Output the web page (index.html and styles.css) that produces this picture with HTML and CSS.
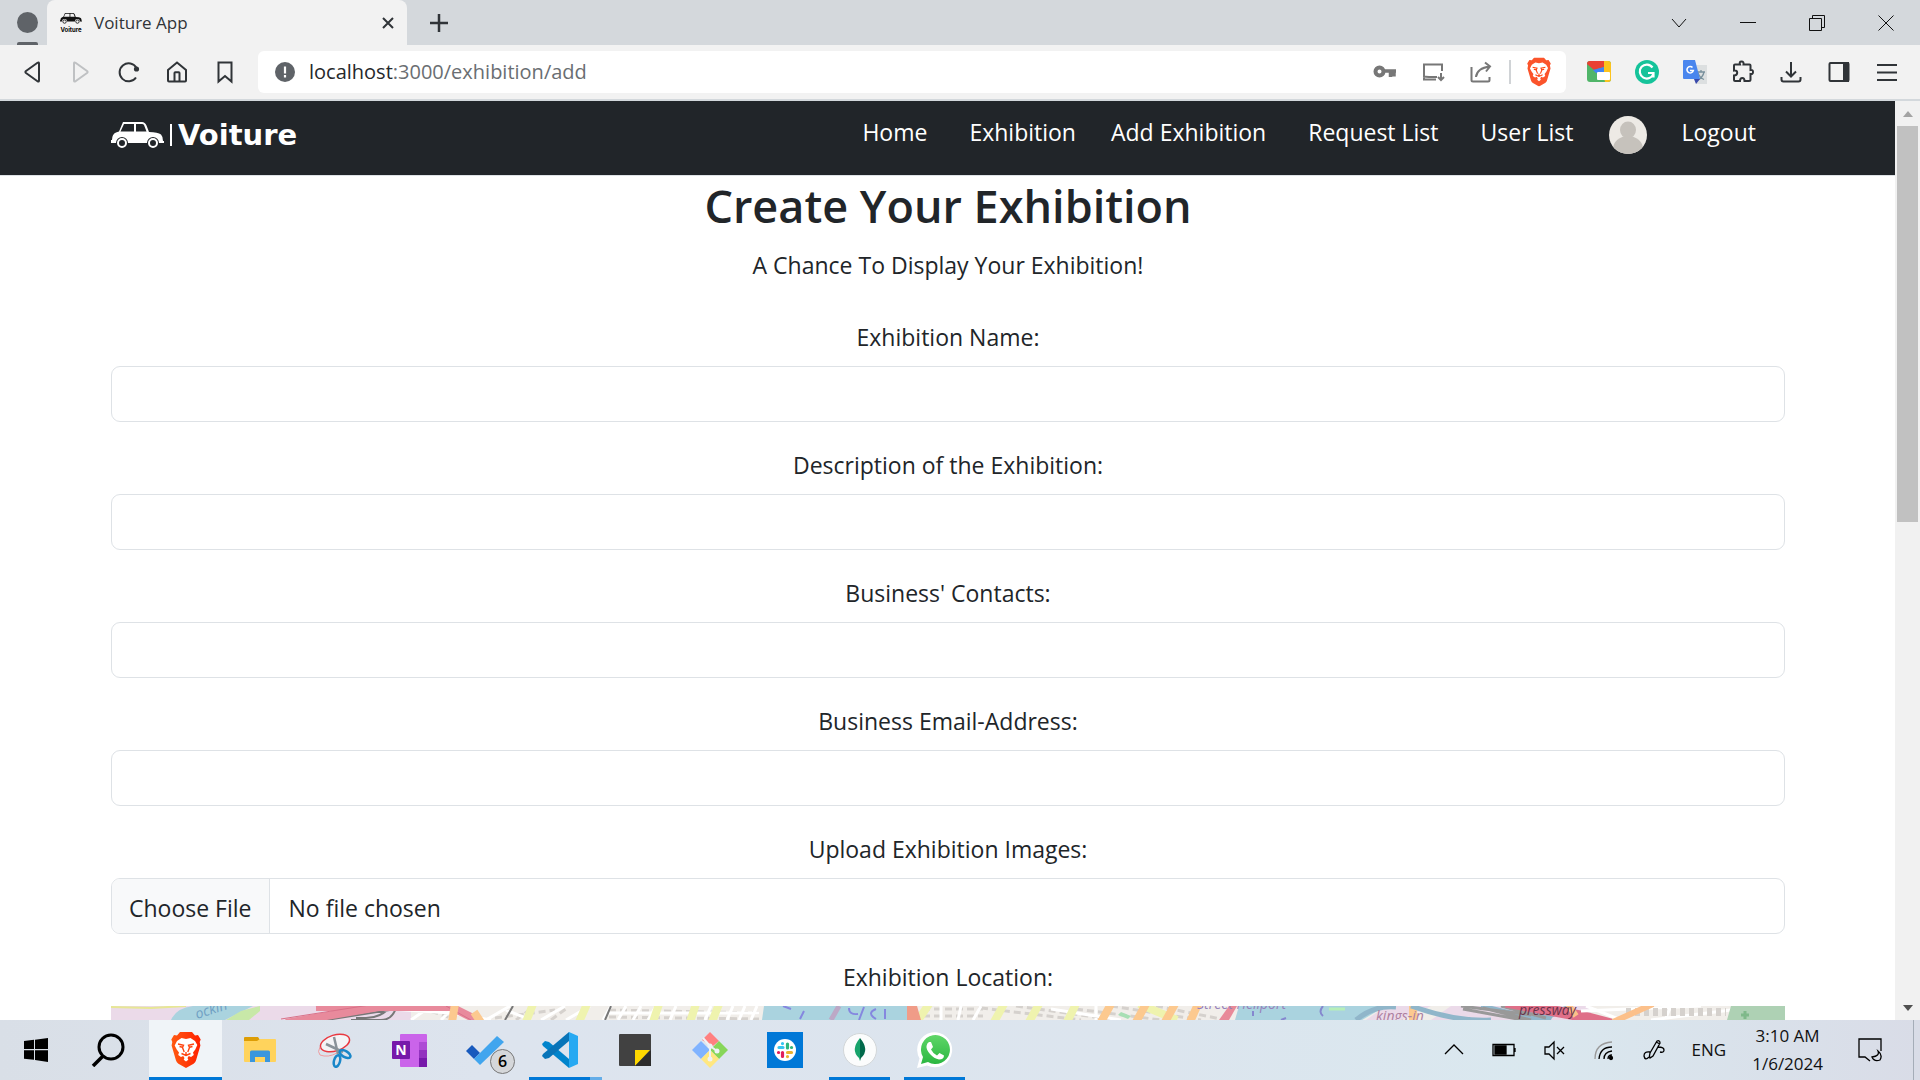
FILE: index.html
```html
<!DOCTYPE html>
<html lang="en">
<head>
<meta charset="utf-8">
<meta name="viewport" content="width=device-width, initial-scale=1">
<title>Voiture App</title>
<link rel="stylesheet" href="styles.css">
</head>
<body>
<svg class="defs" width="0" height="0" aria-hidden="true">
  <defs>
    <linearGradient id="brave-fill" x1="0" x2="1"><stop offset="0" stop-color="#ff5a12"/><stop offset="1" stop-color="#ff2000"/></linearGradient>
    <linearGradient id="wa-fill" x1="0" y1="0" x2="0" y2="1"><stop offset="0" stop-color="#5fd668"/><stop offset="1" stop-color="#2bb741"/></linearGradient>
    <symbol id="lion" viewBox="0 0 30 36">
      <path d="M9 0h12l3 3.400 3-.4 2.700 4.500-1 2.500.7 3.500-4.400 15q-.6 2-2.400 3.200L15 36l-7.600-4.300Q5.600 30.500 5 28.500L.6 13.500l.7-3.500-1-2.500L3 3l3 .4z"/>
      <path fill="#fff" d="M15 7l4.500-1 4.500 3 2.300 4-2 4.500-2.300 3 .8 2.500-2.800 2-2.200-1-1.300 2 .8 1.800L15 29.600l-2.300-1.800.8-1.800-1.300-2-2.200 1-2.800-2L8 20.500l-2.300-3-2-4L6 9l4.500-3z"/>
      <path fill="none" stroke="#ff4410" stroke-width="1.400" d="M7 12l5.500 1.200-1 2.300 1.700 4.500M23 12l-5.500 1.200 1 2.300-1.700 4.500M8.500 14.500l3 .8M21.500 14.500l-3 .8M10.500 21.500l4.500 2 4.500-2M15 20v3.500"/>
    </symbol>
    <symbol id="car" viewBox="0 0 53 27">
      <path fill="currentColor" fill-rule="evenodd" d="M12 0h19q3 0 4.500 3.500L38 10q9 0 12 2.500 2 2 2 6.500h1v2h-5a6 6 0 0 0-12 0H17a6 6 0 0 0-12 0H0v-3h1q0-6 4-7.500l3-1zM13 2l-3.500 7.500H23V2zM25 2v7.500h10.500L33 3q-.6-1-2-1z"/>
      <circle cx="11" cy="21" r="4" fill="none" stroke="currentColor" stroke-width="2"/>
      <circle cx="42" cy="21" r="4" fill="none" stroke="currentColor" stroke-width="2"/>
    </symbol>
  </defs>
</svg>

<header class="browser">
  <div class="tabstrip">
    <div class="profile"><span class="profile-dot"></span><span class="profile-bar"></span></div>
    <div class="tab">
      <svg class="favicon" viewBox="0 0 24 22"><svg x="1" y="0" width="22" height="13" color="#111"><use href="#car"/></svg><text x="12" y="20" text-anchor="middle" class="favicon-text">Voiture</text></svg>
      <span class="tab-title">Voiture App</span>
      <button class="icon-btn" aria-label="Close tab"><svg width="14" height="14" viewBox="0 0 14 14"><path d="M2 2l10 10M12 2L2 12" stroke="#303438" stroke-width="2"/></svg></button>
    </div>
    <button class="icon-btn new-tab" aria-label="New tab"><svg width="20" height="20" viewBox="0 0 20 20"><path d="M10 1v18M1 10h18" stroke="#303438" stroke-width="2.500"/></svg></button>
    <div class="window-controls">
      <button class="icon-btn" aria-label="Search tabs"><svg width="16" height="16" viewBox="0 0 16 16"><path d="M1 4l7 8 7-8" class="thin"/></svg></button>
      <button class="icon-btn" aria-label="Minimize"><svg width="16" height="16" viewBox="0 0 16 16"><path d="M0 7.500h16" class="thin"/></svg></button>
      <button class="icon-btn" aria-label="Restore"><svg width="16" height="16" viewBox="0 0 16 16"><path d="M.5 3.500h12v12H.5zM3.500 3.500v-3h12v12h-3" class="thin"/></svg></button>
      <button class="icon-btn" aria-label="Close"><svg width="16" height="16" viewBox="0 0 16 16"><path d="M.5.5l15 15M15.500.5l-15 15" class="thin"/></svg></button>
    </div>
  </div>
  <div class="toolbar">
    <button class="icon-btn" aria-label="Back"><svg class="tool" viewBox="0 0 24 24"><path d="M18 3.500v17q0 1.800-1.500.7L5 13q-1.200-1 0-2L16.500 2.800Q18 1.700 18 3.500z"/></svg></button>
    <button class="icon-btn" aria-label="Forward"><svg class="tool tool-faded" viewBox="0 0 24 24"><path d="M5 3.500v17q0 1.800 1.500.7L18 13q1.200-1 0-2L6.500 2.800Q5 1.700 5 3.500z"/></svg></button>
    <button class="icon-btn" aria-label="Reload"><svg class="tool" viewBox="0 0 24 24"><path d="M19 17.500A9 9 0 1 1 19.500 8"/><circle cx="19.500" cy="9" r="2.600" fill="#303438" stroke="none"/></svg></button>
    <button class="icon-btn" aria-label="Home"><svg class="tool" viewBox="0 0 24 24"><path d="M3 10l9-7.500 9 7.500v10.500q0 1-1 1H4q-1 0-1-1zM9.500 21v-8q0-.8.8-.8h3.400q.8 0 .8.800v8"/></svg></button>
    <button class="icon-btn" aria-label="Bookmark"><svg class="tool" viewBox="0 0 24 24"><path d="M5.500 2.500h13v19L12 16l-6.500 5.500z"/></svg></button>
    <div class="address">
      <svg class="tool-plain" viewBox="0 0 24 24"><circle cx="12" cy="12" r="10" fill="#5f6368"/><path d="M12 6.500v7M12 15v2.500" stroke="#fff" stroke-width="2.200"/></svg>
      <span class="url"><b>localhost</b>:3000/exhibition/add</span>
      <div class="address-tools">
        <svg class="tool tool-grey" viewBox="0 0 24 24"><circle cx="6.500" cy="11.500" r="4" stroke-width="4"/><path d="M10 11h13M17.500 11v6M21 11v5.500" stroke-width="3.500"/></svg>
        <svg class="tool tool-grey" viewBox="0 0 24 24"><path d="M21 11V4.500H3v15h12M2 16.500l6 .5h8M3 19.500v-4M20 13v7M17 17l3 3 3-3"/></svg>
        <svg class="tool tool-grey" viewBox="0 0 24 24"><path d="M2.500 7v13q0 1.500 1.500 1.500h15q1.500 0 1.500-1.500v-3M7 17q1-9 14-10.500M16 2.500l5 4-4 5"/></svg>
      </div>
      <span class="address-rule"></span>
      <svg class="tool-plain tool-tall" viewBox="0 0 30 36" fill="#fb542b"><use href="#lion"/></svg>
    </div>
    <svg class="tool-plain" viewBox="0 0 24 24"><rect y="1" width="24" height="21" rx="3" fill="#50b569"/><path d="M0 4q0-3 3-3h14v6L7 10 0 4z" fill="#e94134"/><path d="M17 1h4q3 0 3 3v15q0 3-3 3h-3l-1-4z" fill="#fcc31e"/><path d="M6 10l11-3v6H9z" fill="#4285f4"/><rect x="10" y="12" width="13" height="8" rx="1" fill="#fff"/></svg>
    <svg class="tool-plain" viewBox="0 0 24 24"><circle cx="12" cy="12" r="12" fill="#15c39a"/><path d="M17.500 7.500a7 7 0 1 0 1 6M13 13h5.500v4.500" fill="none" stroke="#fff" stroke-width="2.200"/></svg>
    <svg class="tool-plain" viewBox="0 0 24 24"><path d="M10 5h14v19H13z" fill="#dcdfe0"/><path d="M14 12h8M18 10v2M21 12q-1 5-6 8M15 13q2 5 6 6.500" fill="none" stroke="#78909c" stroke-width="1.300"/><path d="M1 0h11l5 19H1q-1 0-1-1V1q0-1 1-1z" fill="#4a86ee"/><path d="M11 19h6l-4 5z" fill="#3949ab"/><path d="M9.500 7.500a3.200 3.200 0 1 0 .8 3H7" fill="none" stroke="#fff" stroke-width="1.600"/></svg>
    <button class="icon-btn" aria-label="Extensions"><svg class="tool" viewBox="0 0 24 24"><path d="M4 4.500h5q-1-3 1.500-3t2 3h6q1 0 1 1v4.500q2.500-.5 2.500 2t-2.500 2v5.500q0 1.500-1.500 1.500h-4.500q0-3-2.200-3T9 21H4q-1 0-1-1v-4.500q3.200 0 3.200-2.700T3 10.500v-5q0-1 1-1z"/></svg></button>
    <button class="icon-btn" aria-label="Downloads"><svg class="tool" viewBox="0 0 24 24"><path d="M12 2v14M7 11.500l5 5 5-5M2.500 17v2.500q0 2 2 2h15q2 0 2-2V17"/></svg></button>
    <button class="icon-btn" aria-label="Sidebar"><svg class="tool" viewBox="0 0 24 24"><rect x="2.500" y="3" width="19" height="18" rx="1"/><path d="M17 3h4v18h-4z" fill="#303438"/></svg></button>
    <button class="icon-btn" aria-label="Menu"><svg class="tool" viewBox="0 0 24 24"><path d="M2 5h20M2 12.500h20M2 20h20"/></svg></button>
  </div>
</header>

<div class="viewport">
  <div class="page">
    <nav class="navbar">
      <a href="#" class="brand"><svg width="53" height="27" viewBox="0 0 53 27"><use href="#car"/></svg><span class="brand-rule"></span><span class="brand-name">Voiture</span></a>
      <ul class="nav-links">
        <li class="wide"><a href="#">Home</a></li>
        <li><a href="#">Exhibition</a></li>
        <li class="wide"><a href="#">Add Exhibition</a></li>
        <li class="wide"><a href="#">Request List</a></li>
        <li><a href="#">User List</a></li>
        <li><a href="#" aria-label="Profile"><svg class="avatar" viewBox="0 0 38 38"><clipPath id="round"><circle cx="19" cy="19" r="19"/></clipPath><g clip-path="url(#round)"><path fill="#edeae5" d="M0 0h38v38H0z"/><ellipse cx="19" cy="14" rx="8" ry="8.500" fill="#c6c2bc"/><ellipse cx="19" cy="33" rx="15" ry="13" fill="#c6c2bc"/></g></svg></a></li>
        <li><a href="#">Logout</a></li>
      </ul>
    </nav>
    <main class="content">
      <h1>Create Your Exhibition</h1>
      <p class="lead">A Chance To Display Your Exhibition!</p>
      <form>
        <div class="field"><label for="name">Exhibition Name:</label><input id="name" type="text"></div>
        <div class="field"><label for="description">Description of the Exhibition:</label><input id="description" type="text"></div>
        <div class="field"><label for="contacts">Business' Contacts:</label><input id="contacts" type="text"></div>
        <div class="field"><label for="email">Business Email-Address:</label><input id="email" type="email"></div>
        <div class="field"><label for="images">Upload Exhibition Images:</label><input id="images" type="file"></div>
        <div class="field">
          <span class="label">Exhibition Location:</span>
          <div class="map">
            <svg viewBox="0 0 1674 14" preserveAspectRatio="xMidYMin slice" fill="none">
              <path fill="#f1eeea" d="M0 0h1674v14H0z"/>
              <path stroke="#d5d1cd" stroke-width="3" stroke-dasharray="7 4" d="M384 12l60-8M405 14l16-12M440 14l16-12M498 4l150 3M498 11l150 2M812 3h60M812 10h60M870 2l100 12M905 0l100 14M965 3l85 11M1000 0l90 14M1045 0l70 14M310 2l30 10"/>
              <path fill="#ebdae9" d="M0 0h300v14H0zM1275 0h45l-30 14h-35zM1340 0h140v14h-160z"/>
              <path stroke="#e7e795" stroke-width="2" d="M0 1l40 1 35-2"/>
              <path fill="#aad3df" d="M82 0h60l-28 14H60q5-12 22-14z"/>
              <path fill="#c8e8a8" d="M130 5l19-5v5l-11 9h-23z"/>
              <path stroke="#fff" stroke-width="3" d="M280 3l60 4 40 7M300 14l20-14M330 14l10-10M375 14l24-14M395 4l25 10M430 14l24-14M455 14l24-14M500 0l-8 14M515 0l-8 14M530 0l-8 14M545 0l-8 14M498 7h150M565 0l-6 14M600 0l-6 14M622 0l-6 14M634 0l-6 14M646 0l-6 14M690 14M830 0v14M850 0l-3 14M870 0l-8 14M985 0v14M940 3l70 11"/>
              <path stroke="#777" stroke-width="2" d="M205 0l40 3M285 2q-4 12-15 12h-30M280 0q-10 12-25 12h-10M215 14l70-11M402 0l-8 14M500 0l-6 14"/>
              <path stroke="#e88a9c" stroke-width="8" d="M175 17L285-2M205 1h135l30 15"/>
              <path stroke="#d87188" d="M170 13L265-2M335 0l25 14"/>
              <path stroke="#fcc98f" stroke-width="8" d="M344-2l-3 18M371 18l-8-12"/>
              <path stroke="#eff3ae" stroke-width="8" d="M422-2l-7 18M476-2l-8 18M548-2l-6 18M585-2l-6 18M608-2l-7 18M735 16l14-20 20 20M818-2l-12 18M893-2l-10 18M928-2l-10 18M965-2l-9 18M1028-2l38 16"/>
              <path fill="#aad3df" d="M653 0h143l4 14H651zM1128 0h147l-24 14h-127z"/>
              <path stroke="#bca8c6" stroke-width="5" d="M728 0l-8 14"/>
              <path stroke="#8587df" stroke-width="2" d="M693 5l-4 8M672 0l8 3M738 2q0 7 9 6M753 1l-5 13M765 3q-10 4 0 10M774 3v10"/>
              <path fill="#f09c88" d="M796 0h10l4 14h-14z"/>
              <path stroke="#fcc98f" stroke-width="8" d="M1000-2l-10 18M1035-2l-10 18M1064-2l-10 18M1087-2l-8 18M1302-2v18"/>
              <path fill="#a8dfb4" d="M1010 6l10 4-3 3-10-4z"/>
              <path fill="#e88a99" d="M1118 0h8l-8 14h-10z"/>
              <path stroke="#8587cf" stroke-width="2" d="M1142 5v5M1170 14l5-2M1212 0q-5 6 0 10"/>
              <path stroke="#b7efb8" stroke-width="3" d="M1218 3h16"/>
              <path stroke="#90b6ca" stroke-width="5" d="M1245 14q18-15 40-13M1300 0q45 16 80 14M1370 0l60 14M1410 0l30 14M1460 0l-30 14"/>
              <path stroke="#999" stroke-width="3" d="M1352 3l60 11M1372 2l48 12M1390 0l45 12M1350 0l70 9"/>
              <path stroke="#df6f88" stroke-width="11" d="M1395-4l75 14 30 8"/>
              <path stroke="#fff" stroke-width="3" d="M1475 0l35 14M1470 5l120-5M1540 14l80-10M1560 0l-6 14"/>
              <path stroke="#d5d1cd" stroke-width="8" stroke-dasharray="5 4" d="M1515 6h100"/>
              <path stroke="#fcc08a" stroke-width="6" d="M1502 16l40-18M1457-2l8 12"/>
              <path fill="#aed1b4" d="M1620 0h54v14h-58z"/><path stroke="#7fb98a" stroke-width="3" d="M1634 5v8M1630 9h8"/>
              <text x="86" y="13" class="map-text" fill="#6f9fc3" transform="rotate(-18 86 13)">ockin</text>
              <text x="1086" y="3" class="map-text" fill="#9781bb">Street Heliport</text>
              <text x="1265" y="15" class="map-text" fill="#ad7f9f">kings-in</text>
              <text x="1408" y="9" class="map-text" fill="#68334a">pressway</text>
            </svg>
          </div>
        </div>
      </form>
    </main>
  </div>
  <div class="scrollbar"><span class="arrow arrow-up"></span><span class="thumb"></span><span class="arrow arrow-down"></span></div>
</div>

<footer class="taskbar">
  <button class="task start" aria-label="Start"><svg width="24" height="24" viewBox="0 0 24 24"><path d="M0 3l10-1.200V11H0zM11 1.700L24 0v11H11zM0 12.200h10v9.600L0 20.700zM11 12.200h13V24l-13-2z"/></svg></button>
  <button class="task search" aria-label="Search"><svg width="34" height="34" viewBox="0 0 34 34"><circle cx="20" cy="14" r="12" fill="none" stroke="#000" stroke-width="3"/><path d="M12 23L2 33" stroke="#000" stroke-width="3.500"/></svg></button>
  <button class="task active" aria-label="Brave"><svg width="30" height="36" viewBox="0 0 30 36" fill="url(#brave-fill)"><use href="#lion"/></svg></button>
  <button class="task" aria-label="File Explorer"><svg width="32" height="28" viewBox="0 0 32 28"><path d="M1 1h13l2 3v5H0V2q0-1 1-1z" fill="#dd9d05"/><path d="M0 5h13l3-2h15q1 0 1 1v21q0 1-1 1H1q-1 0-1-1z" fill="#ffd35c"/><path d="M6 26V16q0-1.500 1.500-1.500h17Q26 14.500 26 16v10h-5v-5H11v5z" fill="#3a96dd"/></svg></button>
  <button class="task" aria-label="Snip"><svg width="36" height="36" viewBox="0 0 36 36" fill="none"><ellipse cx="18" cy="11" rx="15" ry="8" transform="rotate(-17 18 11)" fill="#f4f4f6" stroke="#e93840" stroke-width="1.500"/><path d="M3 15q-3 5 0 8 8 3 17-2" stroke="#ef9ca0"/><path d="M17 5l4 17M9 12l17 8" stroke="#8a9298" stroke-width="2.500"/><ellipse cx="20" cy="29" rx="3" ry="6" transform="rotate(15 20 29)" stroke="#1987c9" stroke-width="2.500"/><ellipse cx="28" cy="22" rx="6" ry="3" transform="rotate(30 28 22)" stroke="#1987c9" stroke-width="2.500"/></svg></button>
  <button class="task" aria-label="OneNote"><svg width="35" height="33" viewBox="0 0 35 33"><rect x="8" width="27" height="33" rx="1" fill="#ca64ea"/><path d="M27 8h8v8h-8z" fill="#ae4bd5"/><path d="M27 16h8v8h-8z" fill="#9332bf"/><path d="M27 24h8v9h-8z" fill="#7719aa"/><rect y="7" width="18" height="18" rx="1" fill="#7719aa"/><text x="9" y="21" text-anchor="middle" class="glyph">N</text></svg></button>
  <button class="task" aria-label="To Do"><svg width="38" height="29" viewBox="0 0 38 29"><path d="M0 15l6-6 8 8-6 6z" fill="#185abd"/><path d="M8 23L31 0l7 6-24 23z" fill="#41a5ee"/></svg><span class="count">6</span></button>
  <button class="task running grouped" aria-label="Visual Studio Code"><svg width="36" height="36" viewBox="0 0 36 36"><path d="M0 12l3-3 4 1 20 17v9L1 14z" fill="#0084cc"/><path d="M0 24l3 3 4-1L27 9V0L1 22z" fill="#0874b8"/><path d="M27 0l9 4v28l-9 4z" fill="#27a9f2"/></svg></button>
  <button class="task" aria-label="Sticky Notes"><svg width="32" height="32" viewBox="0 0 32 32"><rect width="32" height="32" rx="1" fill="#414141"/><path d="M16 16h15L16 32z" fill="#ffd800"/><path d="M32 16v16H16z" fill="#2c2c2c"/></svg></button>
  <button class="task" aria-label="Git"><svg width="36" height="36" viewBox="0 0 36 36"><path d="M18 0l9 9-6 5-11-6z" fill="#ff8080"/><path d="M9 9l9 9-9 9-9-9z" fill="#80b3ff"/><path d="M27 9l9 9-9 9-9-9z" fill="#87d659"/><path d="M18 18l9 9-9 9-9-9z" fill="#ffe780"/><path d="M11 6l7 8v14M18 14l7 5" stroke="#eef2f6" stroke-width="2" fill="none"/><g fill="#eef2f6"><circle cx="18" cy="14" r="2.500"/><circle cx="25" cy="19" r="2.500"/><circle cx="18" cy="27" r="2.500"/></g></svg></button>
  <button class="task" aria-label="Slack"><svg width="36" height="36" viewBox="0 0 36 36"><path fill="#0078d7" d="M0 0h36v36H0z"/><circle cx="18" cy="18" r="11" fill="#fff"/><g stroke-width="3.200" stroke-linecap="round"><path stroke="#36c5f0" d="M12 15.500h4M15.500 11.500v.1"/><path stroke="#2eb67d" d="M20.500 12v4M24.500 15.500h.1"/><path stroke="#ecb22e" d="M20.500 20.500h4M20.500 24.500v.1"/><path stroke="#e01e5a" d="M15.500 20.500v4M11.500 20.500h.1"/></g></svg></button>
  <button class="task running" aria-label="MongoDB Compass"><svg width="34" height="34" viewBox="0 0 34 34"><circle cx="17" cy="17" r="16.500" fill="#fbfcfc" stroke="#d2d6d8"/><path d="M17 5q-10 12-1 20l1 3z" fill="#17a36b"/><path d="M17 5q10 12 1 20l-1 3z" fill="#00684a"/></svg></button>
  <button class="task running" aria-label="WhatsApp"><svg width="36" height="36" viewBox="0 0 36 36"><path d="M0 36l2.500-9.500A17.500 17.500 0 1 1 10 33.500z" fill="#fff"/><path d="M4 32l2-7A14.500 14.500 0 1 1 11 30z" fill="url(#wa-fill)"/><path d="M12 10h2l2 5-2 2.500q2 4 6 6l2.500-2.500 4.500 2.500q0 4-5 4Q17 26.500 13 22T9.500 14q.5-3 2.500-4z" fill="#fff"/></svg></button>
  <div class="tray">
    <svg class="tray-icon" viewBox="0 0 24 24"><path d="M3 16l9-9 9 9"/></svg>
    <svg class="tray-icon" viewBox="0 0 24 24"><path d="M1 6.500h21v11H1zM23 10v4"/><path d="M3 8h11v8H3z" fill="#000"/></svg>
    <svg class="tray-icon" viewBox="0 0 24 24"><path d="M3 9h4l5-5v17l-5-5H3zM15 9l7 7M22 9l-7 7"/></svg>
    <svg class="tray-icon" viewBox="0 0 24 24"><path d="M3 21Q3 5 20 4" stroke="#999"/><path d="M7 21Q8 9 20 9M12 21q0-7 8-8"/><path d="M16 21q0-4 4-4"/><circle cx="19" cy="20" r="1.500" fill="#000"/></svg>
    <svg class="tray-icon" viewBox="0 0 24 24"><path d="M8 20q-1-2 0-5L15 3q3-1 3 2l-7 13zM8 14q-6-1-6 4 1 5 5 1M14 4l4 2M16 9q6 0 6 3t-4 2"/></svg>
    <span class="lang">ENG</span>
    <div class="clock"><span>3:10 AM</span><span>1/6/2024</span></div>
    <svg class="tray-icon notifications" viewBox="0 0 24 24"><path d="M12 23l-5-4H1V1h22v12M20 13q2 5-6 6 2 5 8 3 3-5-2-9z"/></svg>
    <span class="desktop-rule"></span>
  </div>
</footer>
</body>
</html>
```
FILE: styles.css
```css
* { box-sizing: border-box; }

body {
  margin: 0;
  height: 100vh;
  display: flex;
  flex-direction: column;
  overflow: hidden;
  background: #fff;
  color: #212529;
  font: 23px/36px "Open Sans", "Noto Sans", sans-serif;
}

svg { display: block; flex: none; }
.defs { position: absolute; }
a { color: inherit; text-decoration: none; }

button {
  border: 0;
  padding: 0;
  background: none;
  font: inherit;
}

.icon-btn { display: flex; flex: none; }

/* Browser chrome */
.browser { flex: none; border-bottom: 2px solid #d3d8dc; background: #f2f2f2; }

.tabstrip { display: flex; align-items: center; height: 45px; background: #d4d8dc; }

.profile {
  display: flex;
  flex-direction: column;
  align-items: center;
  justify-content: space-between;
  width: 47px;
  height: 45px;
  padding: 12px 3px 0 10px;
}
.profile-dot { width: 21px; height: 21px; border-radius: 50%; background: #5f6368; }
.profile-bar { width: 21px; height: 3px; border-radius: 2px 2px 0 0; background: #5f6368; }

.tab {
  display: flex;
  align-items: center;
  gap: 11px;
  width: 360px;
  height: 45px;
  padding: 0 12px;
  border-radius: 8px 8px 0 0;
  background: #f2f2f2;
}
.favicon { width: 24px; height: 22px; }
.favicon-text { font: bold 6px Inter, sans-serif; }
.tab-title { flex: 1; font-size: 17px; color: #303438; }
.new-tab { margin-left: 22px; }
.window-controls { display: flex; gap: 53px; margin-left: auto; padding-right: 26px; }
.thin { fill: none; stroke: #111; }

.toolbar { display: flex; align-items: center; gap: 24px; height: 54px; padding: 0 21px; }
.tool, .tool-plain { width: 24px; height: 24px; }
.tool { fill: none; stroke: #303438; stroke-width: 2; }
.tool-faded { stroke: #bfc1c3; }
.tool-grey { stroke: #777; }
.tool-tall { height: 30px; }

.address {
  display: flex;
  align-items: center;
  flex: 1;
  gap: 16px;
  height: 42px;
  margin: 0 -3px;
  padding: 0 15px;
  border-radius: 6px;
  background: #fff;
}
.url { flex: 1; margin-left: -4px; font-size: 20px; color: #6a6e72; }
.url b { font-weight: 400; color: #25282b; }
.address-tools { display: flex; gap: 24px; }
.address-rule { width: 2px; height: 24px; background: #d0d3d6; }

/* Web page */
.viewport { display: flex; flex: 1; min-height: 0; }
.page { flex: 1; min-width: 0; overflow: hidden; }

.navbar {
  display: flex;
  justify-content: space-between;
  height: 75px;
  padding: 13px 139px 0 111px;
  border-bottom: 1px solid #dee2e6;
  background: #212529;
  color: #fff;
}
.brand { display: flex; align-items: center; gap: 6px; height: 42px; }
.brand-rule { width: 2px; height: 22px; background: #fff; }
.brand-name { font: bold 29px/42px "DejaVu Sans", sans-serif; }
.nav-links { display: flex; gap: 35px; margin: 0; padding: 0; list-style: none; }
.nav-links .wide { margin-right: 7px; }
.avatar { width: 38px; height: 38px; margin-top: 2px; }

.content { padding: 0 110px 0 111px; text-align: center; }
h1 { margin: 0; padding-top: 1px; font-size: 45px; line-height: 58px; font-weight: 600; }
.lead { margin: 12px 0 37px; }

.field { display: flex; flex-direction: column; gap: 12px; margin-bottom: 26px; line-height: 34px; }
input {
  display: block;
  width: 100%;
  height: 56px;
  padding: 9px 18px;
  border: 1px solid #dee2e6;
  border-radius: 9px;
  background: #fff;
  color: inherit;
  font: inherit;
}
input[type="file"] { padding: 0; overflow: hidden; line-height: 54px; }
input::file-selector-button {
  height: 54px;
  margin: 0 19px 0 0;
  padding: 2px 17px 0;
  border: 0;
  border-right: 1px solid #dee2e6;
  background: #f8f9fa;
  color: inherit;
  font: inherit;
}

.map { height: 480px; overflow: hidden; background: #f1eeea; }
.map svg { width: 100%; }
.map-text { font: italic 14px "Open Sans", sans-serif; }

.scrollbar {
  display: flex;
  flex-direction: column;
  align-items: center;
  width: 25px;
  padding: 10px 0 9px;
  background: #f1f1f1;
}
.thumb { width: 21px; height: 44%; margin-top: 9px; background: #c1c1c1; }
.arrow { border: 5px solid transparent; }
.arrow-up { border-top: 0; border-bottom: 6px solid #a3a3a3; }
.arrow-down { margin-top: auto; border-bottom: 0; border-top: 6px solid #505050; }

/* Taskbar */
.taskbar {
  display: flex;
  flex: none;
  height: 60px;
  background: linear-gradient(90deg, #d9dfe7, #dde4ee 25%, #dce5ee 60%, #dae8ef 80%, #d9dce7);
}
.task {
  position: relative;
  display: flex;
  flex: none;
  align-items: center;
  justify-content: center;
  width: 75px;
}
.task.start { width: 72px; }
.task.search { width: 77px; padding-right: 6px; }
.task.active { width: 73px; background: #f0f4f8; box-shadow: inset 0 -3px #0078d7; }
.running::after {
  content: "";
  position: absolute;
  left: 7px;
  bottom: 0;
  width: 61px;
  height: 3px;
  background: #0078d7;
}
.grouped::after { border-right: 12px solid #64ade8; }
.count {
  position: absolute;
  right: 7px;
  bottom: 6px;
  width: 25px;
  height: 25px;
  border: 1px solid #777;
  border-radius: 50%;
  background: #d5d7da;
  font-size: 16px;
  line-height: 23px;
  font-weight: 600;
}
.glyph { fill: #fff; font: bold 14px "Open Sans", sans-serif; }

.tray { display: flex; align-items: center; gap: 26px; margin-left: auto; padding-right: 6px; color: #111; font-size: 17px; }
.tray-icon { width: 24px; height: 24px; fill: none; stroke: #000; stroke-width: 1.3; }
.notifications { margin: 0 5px 0 9px; }
.clock { display: flex; flex-direction: column; align-items: center; line-height: 28px; }
.desktop-rule { width: 1px; height: 60px; background: #a5adb8; }
```
